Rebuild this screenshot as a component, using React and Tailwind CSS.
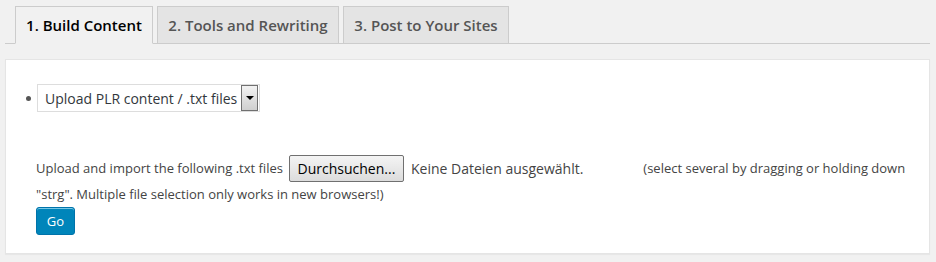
export default function App() {
  const tabs = [
    { label: "1. Build Content", w: "w-[138px]", active: true },
    { label: "2. Tools and Rewriting", w: "w-[182px]" },
    { label: "3. Post to Your Sites", w: "w-[166px]" },
  ];

  return (
    <div className="min-h-screen bg-[#f1f1f1] pt-[6px] font-['Open_Sans',sans-serif] text-[#444]">
      {/* Tabs */}
      <div className="ml-[5px] mr-[6px] flex gap-[4px] border-b border-[#ccc] pl-[10px]">
        {tabs.map((t) => (
          <div
            key={t.label}
            className={
              "-mb-px flex h-[38px] items-center justify-center border border-[#ccc] text-[15px] font-semibold " +
              t.w +
              (t.active
                ? " border-b-[#f1f1f1] bg-[#f1f1f1] text-black"
                : " bg-[#e4e4e4] text-[#555]")
            }
          >
            {t.label}
          </div>
        ))}
      </div>

      {/* Panel */}
      <div className="ml-[5px] mr-[6px] mt-[15px] h-[195px] border border-[#e5e5e5] bg-white pl-[30px] pt-[24px] shadow-[0_1px_1px_rgba(0,0,0,0.04)]">
        <div className="flex items-center">
          <span className="-ml-[10px] mr-[6px] h-[5px] w-[5px] rounded-full bg-[#555]" />
          <div className="flex h-[28px] w-[223px] items-center border border-[#ddd] bg-white pl-[7px] text-[14px] text-[#32373c]">
            <span className="flex-1">Upload PLR content / .txt files</span>
            <span className="mr-px flex h-[26px] w-[17px] items-center justify-center border border-[#707070] bg-gradient-to-b from-[#f2f2f2] to-[#cfcfcf]">
              <span className="h-0 w-0 border-x-[4px] border-t-[4px] border-x-transparent border-t-black" />
            </span>
          </div>
        </div>

        <div className="mt-[43px] text-[13px] leading-[27px]">
          <div className="flex items-center">
            <span>Upload and import the following .txt files</span>
            <span className="ml-[6px] flex h-[27px] w-[115px] items-center justify-center rounded-[2px] border border-[#707070] bg-gradient-to-b from-[#f4f4f4] to-[#dcdcdc] text-[14px] text-black">
              Durchsuchen...
            </span>
            <span className="ml-[7px] text-[14px]">Keine Dateien ausgewählt.</span>
            <span className="ml-[60px] whitespace-nowrap">(select several by dragging or holding down</span>
          </div>
          <div className="-mt-[1px]">"strg". Multiple file selection only works in new browsers!)</div>
          <button className="mt-[-1px] flex h-[28px] w-[39px] items-center justify-center rounded-[3px] border border-[#0073aa] bg-[#0085ba] text-[13px] text-white shadow-[inset_0_1px_0_#78c8e6]">
            Go
          </button>
        </div>
      </div>
    </div>
  );
}
